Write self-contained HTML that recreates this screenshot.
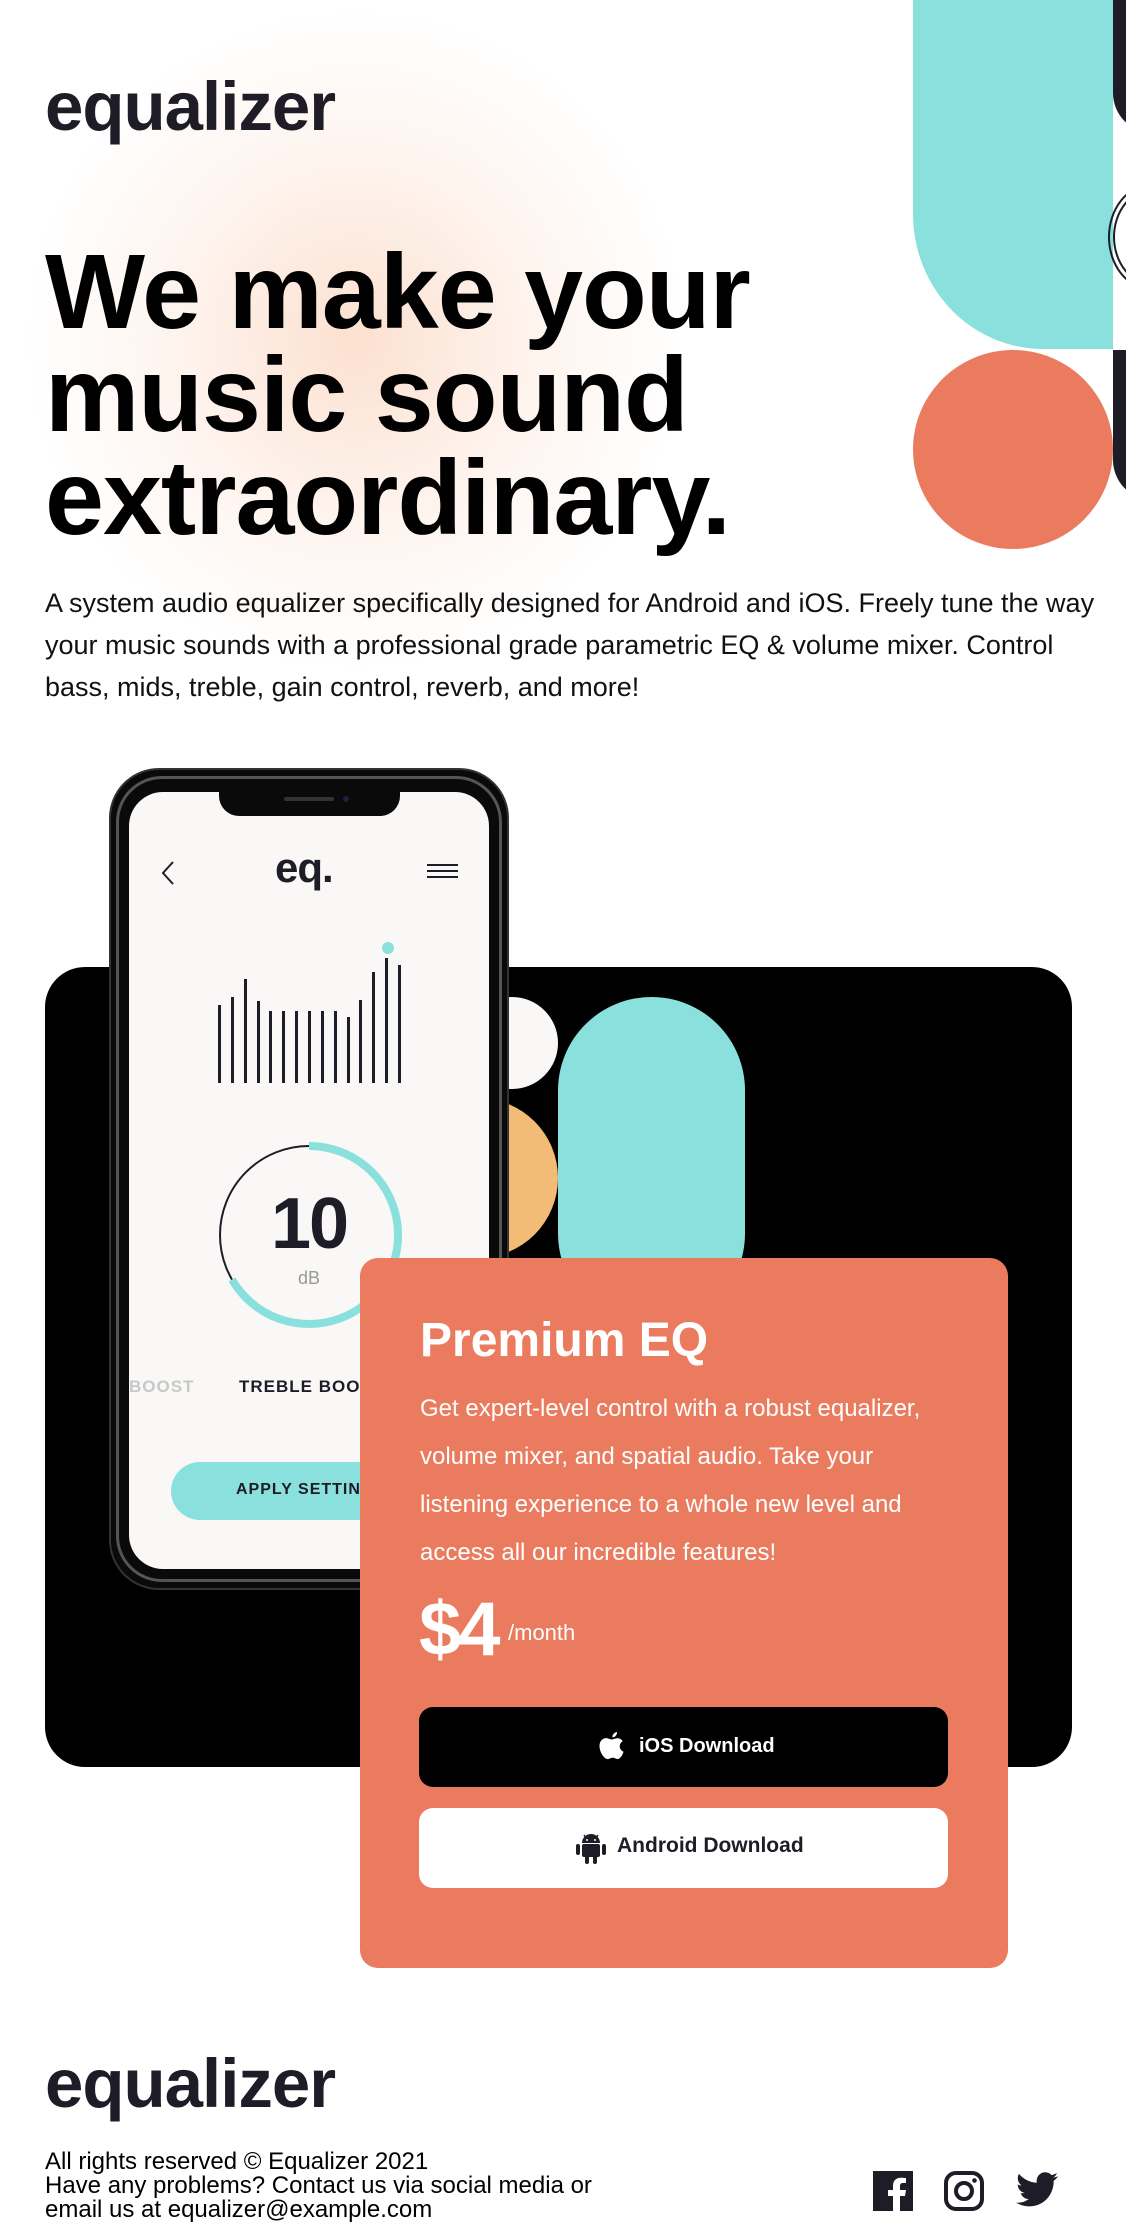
<!DOCTYPE html>
<html><head><meta charset="utf-8">
<style>
*{margin:0;padding:0;box-sizing:border-box}
html,body{width:1126px;height:2228px;overflow:hidden;background:#fff;position:relative;font-family:"Liberation Sans",Arial,sans-serif}
.a{position:absolute}
.logo{font-weight:700;font-size:69px;line-height:66px;color:#1d1c27;letter-spacing:-1px;white-space:nowrap}
h1{position:absolute;left:45px;top:241px;font-size:106px;line-height:103px;letter-spacing:-1px;font-weight:700;color:#000;white-space:nowrap}
.p{font-size:27px;line-height:42px;color:#111;white-space:nowrap}
.bar{position:absolute;width:3px;background:#1d1c27;bottom:0}
</style></head><body>
<div class="a" style="left:0;top:0;width:720px;height:720px;background:radial-gradient(circle at 355px 340px, rgba(251,214,192,0.75) 0, rgba(252,228,214,0.45) 170px, rgba(255,255,255,0) 330px)"></div>

<div class="a" style="left:913px;top:-160px;width:200px;height:509px;background:#8ae0dc;border-radius:120px 0 0 130px / 130px 0 0 135px"></div>
<div class="a" style="left:1113px;top:-20px;width:40px;height:153px;background:#1d1c27;border-bottom-left-radius:40px"></div>
<svg class="a" style="left:1106px;top:180px" width="20" height="115"><ellipse cx="45" cy="57" rx="42" ry="52" fill="none" stroke="#1d1c27" stroke-width="2"/><ellipse cx="48" cy="57" rx="40" ry="48" fill="none" stroke="#1d1c27" stroke-width="2"/></svg>
<div class="a" style="left:1113px;top:350px;width:40px;height:150px;background:#1d1c27;border-bottom-left-radius:40px"></div>
<div class="a" style="left:913px;top:350px;width:200px;height:199px;background:#eb7b5e;border-radius:50%"></div>

<div class="a logo" style="left:45px;top:74px">equalizer</div>
<h1>We make your<br>music sound<br>extraordinary.</h1>
<div class="a p" style="left:45px;top:582px">A system audio equalizer specifically designed for Android and iOS. Freely tune the way<br>your music sounds with a professional grade parametric EQ &amp; volume mixer. Control<br>bass, mids, treble, gain control, reverb, and more!</div>

<div class="a" style="left:45px;top:967px;width:1027px;height:800px;background:#000;border-radius:40px"></div>
<div class="a" style="left:466px;top:997px;width:92px;height:92px;background:#faf8f6;border-radius:50%"></div>
<div class="a" style="left:398px;top:1098px;width:160px;height:160px;background:#f3bc76;border-radius:50%"></div>
<div class="a" style="left:558px;top:997px;width:187px;height:330px;background:#8ae0dc;border-radius:94px"></div>

<div class="a" style="left:109px;top:768px;width:400px;height:822px;background:#0a0a0a;border-radius:50px;border:2px solid #333"></div>
<div class="a" style="left:116px;top:776px;width:386px;height:806px;border-radius:46px;border:3px solid #555"></div>
<div class="a" style="left:129px;top:792px;width:360px;height:777px;background:#faf8f6;border-radius:34px;overflow:hidden">
  <div class="a" style="left:90px;top:-10px;width:181px;height:34px;background:#0a0a0a;border-radius:0 0 20px 20px"></div>
  <div class="a" style="left:155px;top:5px;width:50px;height:4px;background:#333;border-radius:2px"></div>
  <div class="a" style="left:214px;top:4px;width:6px;height:6px;background:#1a2040;border-radius:50%"></div>
  <svg class="a" style="left:31px;top:68px" width="16" height="26"><path d="M13 2 L3 13 L13 24" fill="none" stroke="#1d1c27" stroke-width="2"/></svg>
  <div class="a" style="left:146px;top:54px;font-size:42px;font-weight:700;color:#1d1c27;letter-spacing:-1px;line-height:44px">eq.</div>
  <div class="a" style="left:298px;top:72px;width:31px;height:2px;background:#1d1c27;box-shadow:0 6px 0 #1d1c27,0 12px 0 #1d1c27"></div>
  <div class="a" style="left:89px;top:150px;width:185px;height:141px">
    <div class="bar" style="left:0;height:78px"></div><div class="bar" style="left:13px;height:86px"></div><div class="bar" style="left:26px;height:104px"></div><div class="bar" style="left:39px;height:82px"></div><div class="bar" style="left:51px;height:72px"></div><div class="bar" style="left:64px;height:72px"></div><div class="bar" style="left:77px;height:72px"></div><div class="bar" style="left:90px;height:72px"></div><div class="bar" style="left:103px;height:72px"></div><div class="bar" style="left:116px;height:72px"></div><div class="bar" style="left:129px;height:66px"></div><div class="bar" style="left:141px;height:83px"></div><div class="bar" style="left:154px;height:111px"></div><div class="bar" style="left:167px;height:125px"></div><div class="bar" style="left:180px;height:118px"></div>
    <div class="a" style="left:164px;top:0;width:12px;height:12px;border-radius:50%;background:#8ae0dc"></div>
  </div>
  <svg class="a" style="left:80px;top:343px" width="200" height="200" viewBox="0 0 200 200">
    <circle cx="100" cy="100" r="89" fill="none" stroke="#1d1c27" stroke-width="2"/>
    <path d="M100 11 A89 89 0 1 1 23 144.5" fill="none" stroke="#8ae0dc" stroke-width="8"/>
  </svg>
  <div class="a" style="left:80px;top:392px;width:200px;text-align:center;font-size:72px;font-weight:700;color:#1d1c27;line-height:80px;letter-spacing:-2px">10</div>
  <div class="a" style="left:80px;top:476px;width:200px;text-align:center;font-size:18px;color:#999">dB</div>
  <div class="a" style="left:0px;top:585px;font-size:17px;font-weight:700;color:#c8c8c8;letter-spacing:1px">BOOST</div>
  <div class="a" style="left:110px;top:585px;font-size:17px;font-weight:700;color:#1d1c27;letter-spacing:1px">TREBLE BOOST</div>
  <div class="a" style="left:42px;top:670px;width:260px;height:58px;background:#8ae0dc;border-radius:29px"></div>
  <div class="a" style="left:107px;top:689px;font-size:16px;font-weight:700;color:#1d1c27;letter-spacing:1px">APPLY SETTINGS</div>
</div>

<div class="a" style="left:360px;top:1258px;width:648px;height:710px;background:#eb7b5e;border-radius:18px"></div>
<div class="a" style="left:420px;top:1317px;font-size:48px;line-height:48px;font-weight:700;color:#fff">Premium EQ</div>
<div class="a" style="left:420px;top:1385px;font-size:24px;line-height:48px;color:#fff;white-space:nowrap">Get expert-level control with a robust equalizer,<br>volume mixer, and spatial audio. Take your<br>listening experience to a whole new level and<br>access all our incredible features!</div>
<div class="a" style="left:419px;top:1592px;font-size:76px;line-height:76px;font-weight:700;color:#fff;letter-spacing:-3px">$4</div>
<div class="a" style="left:508px;top:1620px;font-size:22px;color:#fff">/month</div>
<div class="a" style="left:419px;top:1707px;width:529px;height:80px;background:#000;border-radius:14px"></div>
<svg class="a" style="left:598px;top:1732px" width="28" height="31" viewBox="0 0 28 31"><path d="M19 0c.3 2.5-1.8 5.5-4.6 5.4-.3-2.4 1.9-5.2 4.6-5.4zM14 7.5c1.5 0 3.3-1.4 5.5-1.2 1 .1 3.6.4 5.2 2.9-4.4 2.7-3.7 8.6.9 10.5-.9 2.6-3.2 7.3-6 7.3-2 0-2.5-1.2-4.8-1.2-2.4 0-3 1.2-4.9 1.3C6.5 27.2 1.5 20.5 1.5 14c0-5.4 3.6-7.9 6.6-7.9 2.4 0 3.9 1.4 5.9 1.4z" fill="#fff"/></svg>
<div class="a" style="left:639px;top:1735px;font-size:20px;font-weight:700;color:#fff">iOS Download</div>
<div class="a" style="left:419px;top:1808px;width:529px;height:80px;background:#fff;border-radius:14px"></div>
<svg class="a" style="left:576px;top:1832px" width="30" height="32" viewBox="0 0 30 32"><path d="M6 11 A9 9 0 0 1 24 11z" fill="#1d1c27"/><path d="M8 3l2 3M22 3l-2 3" stroke="#1d1c27" stroke-width="1.5"/><circle cx="11" cy="8" r="1" fill="#fff"/><circle cx="19" cy="8" r="1" fill="#fff"/><rect x="6" y="12" width="18" height="13" rx="2" fill="#1d1c27"/><rect x="0" y="12" width="4" height="11" rx="2" fill="#1d1c27"/><rect x="26" y="12" width="4" height="11" rx="2" fill="#1d1c27"/><rect x="9" y="23" width="4" height="9" rx="2" fill="#1d1c27"/><rect x="17" y="23" width="4" height="9" rx="2" fill="#1d1c27"/></svg>
<div class="a" style="left:617px;top:1834px;font-size:21px;font-weight:700;color:#1d1c27">Android Download</div>

<div class="a logo" style="left:45px;top:2051px">equalizer</div>
<div class="a" style="left:45px;top:2150px;font-size:24px;line-height:24px;color:#000;white-space:nowrap">All rights reserved © Equalizer 2021<br>Have any problems? Contact us via social media or<br>email us at equalizer@example.com</div>
<svg class="a" style="left:873px;top:2171px" width="40" height="40" viewBox="0 0 40 40"><rect width="40" height="40" fill="#1d1c27"/><path d="M27 40V25h5l1-6h-6v-4c0-2 1-3 3-3h3V7c-1 0-3-.3-5-.3-5 0-8 3-8 8v4.3h-5v6h5v15z" fill="#fff"/></svg>
<svg class="a" style="left:944px;top:2171px" width="40" height="40" viewBox="0 0 40 40"><rect x="2" y="2" width="36" height="36" rx="10" fill="none" stroke="#1d1c27" stroke-width="4"/><circle cx="20" cy="20" r="8" fill="none" stroke="#1d1c27" stroke-width="4"/><circle cx="30.5" cy="9.5" r="2.3" fill="#1d1c27"/></svg>
<svg class="a" style="left:1016px;top:2171px" width="42" height="40" viewBox="0 0 24 22"><path d="M24 2.6c-.9.4-1.8.6-2.8.8 1-.6 1.8-1.6 2.2-2.7-1 .6-2 1-3.1 1.2C19.4.9 18.1.3 16.7.3c-2.7 0-4.9 2.2-4.9 4.9 0 .4 0 .8.1 1.1C7.8 6.1 4.2 4.1 1.7 1.2c-.4.7-.7 1.6-.7 2.5 0 1.7.9 3.2 2.2 4.1-.8 0-1.6-.2-2.2-.6v.1c0 2.4 1.7 4.4 3.9 4.8-.4.1-.8.2-1.3.2-.3 0-.6 0-.9-.1.6 2 2.4 3.4 4.6 3.4-1.7 1.3-3.8 2.1-6.1 2.1-.4 0-.8 0-1.2-.1 2.2 1.4 4.8 2.2 7.5 2.2 9.1 0 14-7.5 14-14v-.6c1-.7 1.8-1.6 2.5-2.5z" fill="#1d1c27"/></svg>
</body></html>
